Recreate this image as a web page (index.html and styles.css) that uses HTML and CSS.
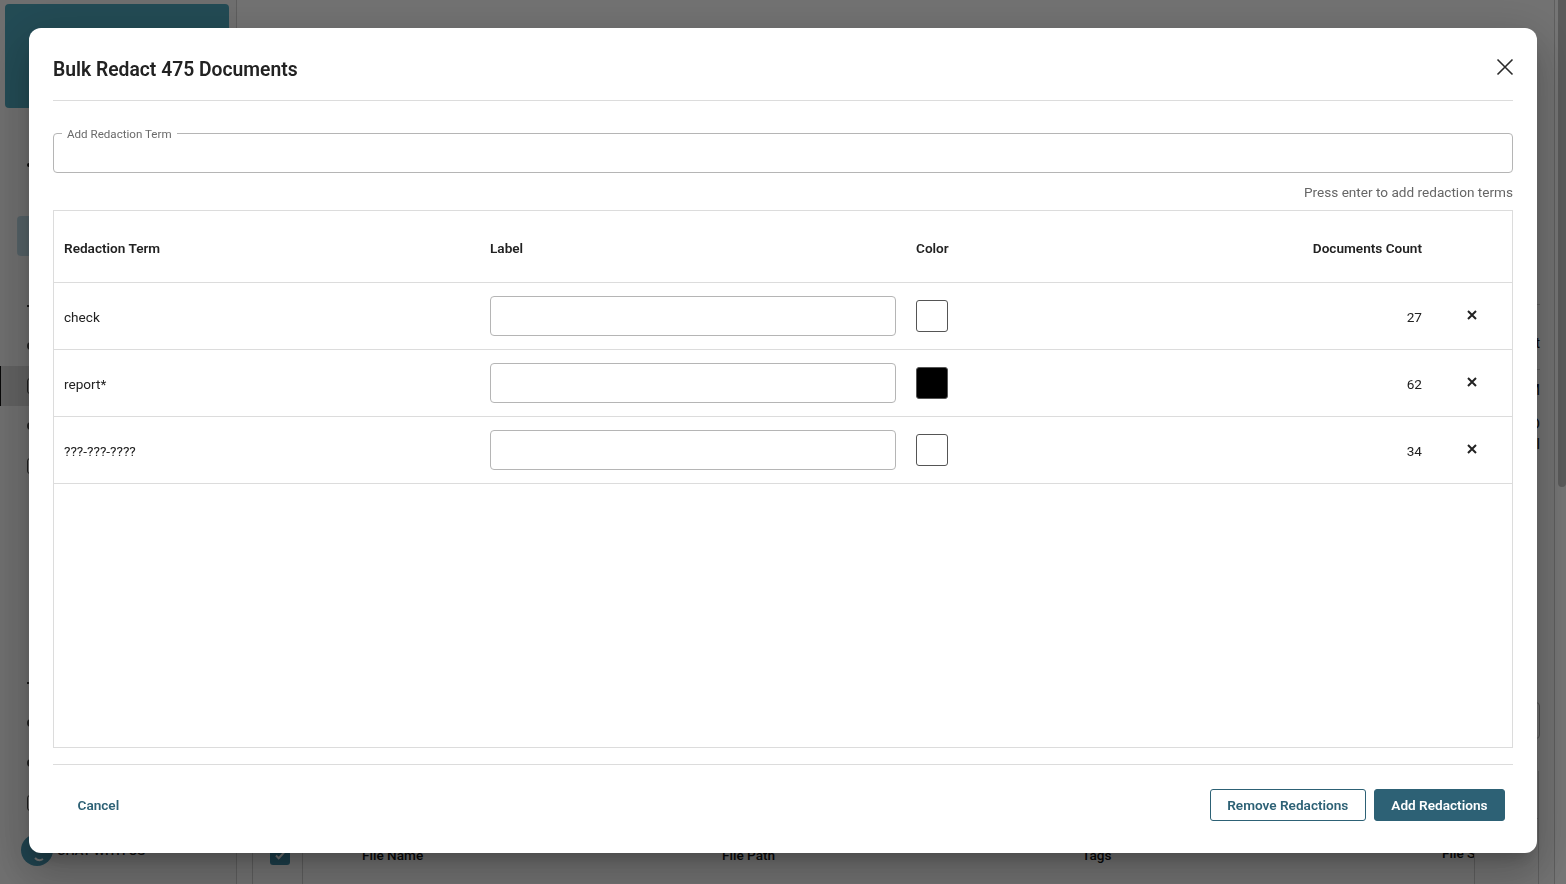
FILE: index.html
```html
<!DOCTYPE html>
<html lang="en">

<head>
    <meta charset="UTF-8">
    <meta name="viewport" content="width=device-width, initial-scale=1.0">
    <title>Bulk Redact</title>
    <link rel="stylesheet" href="styles.css">
</head>

<body>
    <div class="page">
        <aside class="sidebar">
            <div class="brandCard"></div>
            <div class="backLink"></div>
            <div class="sideButton"></div>
            <div class="sideList">
                <div class="sideItem"><span class="sideIcon dash"></span></div>
                <div class="sideItem"><span class="sideIcon blob"></span></div>
                <div class="sideItem active"><span class="sideIcon box"></span></div>
                <div class="sideItem"><span class="sideIcon blob"></span></div>
                <div class="sideItem"><span class="sideIcon box"></span></div>
            </div>
            <div class="sideSpacer"></div>
            <div class="sideItem"><span class="sideIcon dash"></span></div>
            <div class="sideItem"><span class="sideIcon blob"></span></div>
            <div class="sideItem"><span class="sideIcon blob"></span></div>
            <div class="sideItem"><span class="sideIcon box"></span></div>
            <div class="chat">
                <span class="chatDot">
                    <svg width="32" height="32" viewBox="0 0 32 32"><path d="M14 24c2 2 5 3 8 1" fill="none" stroke="#fff" stroke-width="2"/></svg>
                </span>
                <span>CHAT WITH US</span>
            </div>
        </aside>
        <main class="content">
            <div class="infoPanel">
                <div class="infoRule firstRule"></div>
                <div class="infoText exportText">Export</div>
                <div class="infoRule"></div>
                <div class="infoText itemText">ITEM</div>
                <div class="infoText idText">ID</div>
                <div class="infoText">Il</div>
                <div class="infoBox"></div>
            </div>
            <div class="tableWrap">
                <div class="tableHead">
                    <div class="checkCell">
                        <span class="check">
                            <svg width="12" height="12" viewBox="0 0 12 12"><path d="M2 6.5l2.7 2.7L10 3.5" fill="none" stroke="#fff" stroke-width="2"/></svg>
                        </span>
                    </div>
                    <div class="nameCol">File Name</div>
                    <div class="pathCol">File Path</div>
                    <div class="tagCol">Tags</div>
                    <div class="sizeCol">File S</div>
                </div>
            </div>
        </main>
        <div class="scrollThumb"></div>
    </div>

    <div class="backdrop">
        <div class="modal">
            <div class="modalHead">
                <h1>Bulk Redact 475 Documents</h1>
                <button class="closeBtn" aria-label="Close">
                    <svg width="18" height="18" viewBox="0 0 18 18"><path d="M1.5 1.5l15 15M16.5 1.5l-15 15" fill="none" stroke="#2b2b2b" stroke-width="1.6"/></svg>
                </button>
            </div>

            <fieldset class="termField">
                <legend>Add Redaction Term</legend>
            </fieldset>
            <div class="hint">Press enter to add redaction terms</div>

            <div class="termTable">
                <div class="row headRow">
                    <div class="termCol">Redaction Term</div>
                    <div class="labelCol">Label</div>
                    <div class="colorCol">Color</div>
                    <div class="countCol">Documents Count</div>
                    <div class="delCol"></div>
                </div>
                <div class="row">
                    <div class="termCol">check</div>
                    <div class="labelCol"><input class="labelInput" type="text"></div>
                    <div class="colorCol"><span class="swatch"></span></div>
                    <div class="countCol">27</div>
                    <div class="delCol"><svg class="del" width="10" height="10" viewBox="0 0 10 10"><path d="M1 1l8 8M9 1l-8 8" fill="none" stroke="#222" stroke-width="2"/></svg></div>
                </div>
                <div class="row">
                    <div class="termCol">report*</div>
                    <div class="labelCol"><input class="labelInput" type="text"></div>
                    <div class="colorCol"><span class="swatch black"></span></div>
                    <div class="countCol">62</div>
                    <div class="delCol"><svg class="del" width="10" height="10" viewBox="0 0 10 10"><path d="M1 1l8 8M9 1l-8 8" fill="none" stroke="#222" stroke-width="2"/></svg></div>
                </div>
                <div class="row">
                    <div class="termCol">???-???-????</div>
                    <div class="labelCol"><input class="labelInput" type="text"></div>
                    <div class="colorCol"><span class="swatch"></span></div>
                    <div class="countCol">34</div>
                    <div class="delCol"><svg class="del" width="10" height="10" viewBox="0 0 10 10"><path d="M1 1l8 8M9 1l-8 8" fill="none" stroke="#222" stroke-width="2"/></svg></div>
                </div>
            </div>

            <div class="modalFoot">
                <button class="btn cancel">Cancel</button>
                <div class="footRight">
                    <button class="btn outline">Remove Redactions</button>
                    <button class="btn solid">Add Redactions</button>
                </div>
            </div>
        </div>
    </div>
</body>

</html>
```

FILE: styles.css
```css
* {
    box-sizing: border-box;
}

html,
body {
    height: 100%;
    margin: 0;
    overflow: hidden;
}

body {
    font-family: Roboto, "Liberation Sans", sans-serif;
    font-size: 13.6px;
    color: #222;
    background: #fff;
}

button {
    font-family: inherit;
}

/* page behind the modal */
.page {
    display: flex;
    height: 100%;
    padding-right: 11px;
}

.sidebar {
    width: 237px;
    flex: none;
    padding-top: 4px;
    display: flex;
    flex-direction: column;
    background: #f2f2f2;
    border-right: 1px solid #ccc;
}

.brandCard {
    width: 224px;
    height: 104px;
    margin-left: 5px;
    border-radius: 4px;
    background: #4ca3b8;
}

.backLink {
    width: 4px;
    height: 4px;
    margin: 55px 0 49px 27px;
    border-radius: 50%;
    background: #111;
}

.sideButton {
    width: 40px;
    height: 40px;
    margin-left: 17px;
    border-radius: 4px;
    background: #b8d4df;
}

.sideList {
    margin-top: 30px;
}

.sideItem {
    height: 40px;
    display: flex;
    align-items: center;
    padding-left: 27px;
}

.sideItem.active {
    background: #d4d4d4;
    border-left: 1px solid #111;
    padding-left: 26px;
}

.sideIcon {
    display: block;
    width: 14px;
}

.dash {
    height: 2px;
    background: #333;
}

.blob {
    height: 8px;
    border-radius: 4px;
    background: #444;
}

.box {
    height: 16px;
    border: 1.5px solid #444;
    border-radius: 3px;
}

.sideSpacer {
    flex: 1;
}

.chat {
    display: flex;
    align-items: center;
    gap: 4px;
    height: 32px;
    margin: 11px 0 18px 21px;
    font-size: 13px;
    font-weight: 500;
}

.chatDot {
    width: 32px;
    height: 32px;
    border-radius: 50%;
    background: #4593ad;
}

.chatDot svg {
    display: block;
}

.content {
    flex: 1;
    display: flex;
    flex-direction: column;
    border-right: 1px solid #ccc;
    background: #f8f8f8;
}

.infoPanel {
    display: flex;
    flex-direction: column;
    align-items: flex-end;
    padding-right: 14px;
    font-size: 14px;
    line-height: 20px;
    color: #111;
}

.infoRule {
    width: 40px;
    height: 1px;
    margin-top: 16px;
    background: #ccc;
}

.firstRule {
    margin-top: 304px;
}

.exportText {
    margin-top: 28px;
}

.itemText {
    margin-top: 10px;
}

.idText {
    margin-top: 14px;
}

.infoBox {
    width: 60px;
    height: 37px;
    margin-top: 248px;
    border: 1px solid #aaa;
    border-radius: 4px;
}

.tableWrap {
    flex: 1;
    margin: 32px 15px 0 15px;
    display: flex;
    flex-direction: column;
    justify-content: flex-end;
    border-right: 1px solid #ccc;
}

.tableHead {
    display: flex;
    align-items: center;
    height: 66px;
    font-weight: 500;
    color: #111;
    border-top: 1px solid #ccc;
}

.checkCell {
    width: 51px;
    height: 100%;
    flex: none;
    padding: 26px 0 0 4px;
    display: flex;
    justify-content: center;
    border-left: 1px solid #ccc;
    border-right: 1px solid #ccc;
}

.check {
    width: 20px;
    height: 20px;
    border-radius: 3px;
    background: #3d8aa5;
    display: flex;
    align-items: center;
    justify-content: center;
}

.nameCol,
.pathCol,
.tagCol {
    flex: none;
    padding-top: 6px;
}

.nameCol {
    width: 419px;
    padding-left: 59px;
}

.pathCol,
.tagCol {
    width: 360px;
}

.sizeCol {
    width: 33px;
    height: 100%;
    flex: none;
    padding-top: 26px;
    overflow: hidden;
    white-space: nowrap;
    border-right: 1px solid #ccc;
}

.scrollThumb {
    position: absolute;
    top: 0;
    right: 0;
    width: 8px;
    height: 487px;
    border-radius: 0 0 4px 4px;
    background: #c4c4c4;
}

/* modal */
.backdrop {
    position: fixed;
    top: 0;
    right: 0;
    bottom: 0;
    left: 0;
    padding: 28px 29px 31px;
    background: rgba(0, 0, 0, 0.54);
}

.modal {
    height: 100%;
    padding: 0 24px;
    display: flex;
    flex-direction: column;
    background: #fff;
    border-radius: 12px;
    box-shadow: 0 11px 15px -7px rgba(0, 0, 0, 0.2), 0 24px 38px 3px rgba(0, 0, 0, 0.14), 0 9px 46px 8px rgba(0, 0, 0, 0.12);
}

.modalHead {
    display: flex;
    align-items: center;
    justify-content: space-between;
    height: 73px;
    padding-top: 10px;
    flex: none;
    border-bottom: 1px solid #dcdcdc;
}

.modalHead h1 {
    margin: 0;
    font-size: 19.3px;
    font-weight: 600;
    color: #222;
}

.closeBtn {
    padding: 0;
    margin: -4px -1px 0 0;
    border: none;
    background: none;
    display: flex;
}

.termField {
    flex: none;
    height: 46px;
    margin: 26px 0 0;
    padding: 0 8px;
    border: 1px solid #b5b5b5;
    border-radius: 4px;
}

.termField legend {
    padding: 1px 5px 0;
    font-size: 11.6px;
    line-height: 12px;
    color: #6a6a6a;
}

.hint {
    flex: none;
    height: 37px;
    padding-top: 11px;
    text-align: right;
    color: #666;
}

.termTable {
    flex: 1;
    border: 1px solid #dcdcdc;
}

.row {
    display: flex;
    align-items: center;
    height: 67px;
    border-bottom: 1px solid #dcdcdc;
}

.headRow {
    height: 72px;
    font-weight: 600;
}

.headRow > div {
    padding-top: 2px;
}

.termCol {
    width: 436px;
    flex: none;
    padding-top: 2px;
    padding-left: 10px;
}

.labelCol {
    width: 426px;
    flex: none;
}

.colorCol {
    width: 316px;
    flex: none;
}

.countCol {
    width: 190px;
    flex: none;
    padding-top: 2px;
    text-align: right;
}

.delCol {
    flex: 1;
    padding-left: 45px;
}

.labelInput {
    display: block;
    width: 406px;
    height: 40px;
    border: 1px solid #b5b5b5;
    border-radius: 4px;
    background: #fff;
}

.swatch {
    display: block;
    width: 32px;
    height: 32px;
    border: 1px solid #555;
    border-radius: 3px;
    background: #fff;
}

.swatch.black {
    background: #000;
}

.del {
    display: block;
    margin-top: -2px;
}

.modalFoot {
    flex: none;
    height: 89px;
    margin-top: 16px;
    padding: 0 8px 8px;
    display: flex;
    align-items: center;
    justify-content: space-between;
    border-top: 1px solid #dcdcdc;
}

.footRight {
    display: flex;
    gap: 8px;
}

.btn {
    height: 32px;
    padding: 0 16.5px;
    border-radius: 3px;
    font-size: 13.6px;
    font-weight: 600;
    cursor: pointer;
}

.cancel {
    border: none;
    background: none;
    color: #2d6175;
}

.outline {
    border: 1px solid #2d6175;
    background: #fff;
    color: #2d6175;
}

.solid {
    border: 1px solid #2d6175;
    background: #2d6175;
    color: #fff;
}
```
